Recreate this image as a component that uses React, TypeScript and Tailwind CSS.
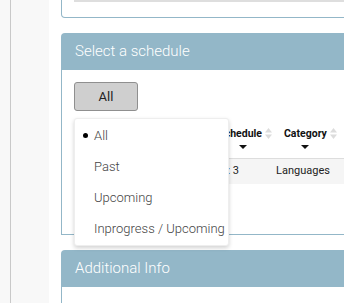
import React from "react";

const SortIcon: React.FC = () => (
  <svg width="7" height="12" viewBox="0 0 7 12" className="ml-[3px] mt-[10px]">
    <polygon points="3.5,0 7,4.5 0,4.5" fill="#dcdcdc" />
    <polygon points="0,6.5 7,6.5 3.5,11" fill="#dcdcdc" />
  </svg>
);

const Caret: React.FC = () => (
  <svg width="8" height="4" viewBox="0 0 8 4">
    <polygon points="0,0 8,0 4,4" fill="#111" />
  </svg>
);

const filters = ["All", "Past", "Upcoming", "Inprogress / Upcoming"];

const App: React.FC = () => {
  return (
    <div className="flex h-[303px] w-[344px] overflow-hidden bg-white font-['Roboto',sans-serif]">
      <aside className="w-[49px] shrink-0 bg-[#f8f8f8]">
        <div className="ml-[10px] h-full border-l border-[#c9c9c9]" />
      </aside>

      <main className="relative flex-1 pl-[12px]">
        {/* bottom of the card above */}
        <div className="h-[18px] w-[300px] rounded-b-[4px] border-x border-b border-[#93b7c8]">
          <div className="ml-[12px] h-[2px] bg-[#dedede]" />
        </div>

        <section className="mt-[15px] w-[300px]">
          <div className="flex h-[37px] items-center rounded-t-[4px] bg-[#93b7c8] pl-[14px] text-[15px] font-light text-white">
            Select a schedule
          </div>
          <div className="h-[165px] border-b border-l border-[#93b7c8] px-[12px] pt-[12px]">
            <button className="h-[29px] w-[64px] rounded-[3px] border border-[#8f8f8f] bg-[#cfcfcf] text-[13px] text-[#222]">
              All
            </button>

            <div className="mt-[7px] flex h-[41px] border-b border-[#dddddd] text-[10.5px] font-bold text-[#111]">
              <div className="w-[138px]" />
              <div className="flex w-[50px] flex-col items-end pt-[8px]">
                <span>Schedule</span>
                <span className="mr-[15px] mt-[3px] flex"><Caret /></span>
              </div>
              <SortIcon />
              <div className="ml-[12px] flex flex-col items-center pt-[8px]">
                <span>Category</span>
                <span className="mt-[3px] flex"><Caret /></span>
              </div>
              <SortIcon />
            </div>
            <div className="flex h-[25px] items-center bg-[#f5f5f5] text-[11px] text-[#222]">
              <div className="w-[165px] text-right">Week: 3</div>
              <div className="pl-[37px]">Languages</div>
            </div>
          </div>
        </section>

        <section className="mt-[15px] w-[300px]">
          <div className="flex h-[37px] items-center rounded-t-[4px] bg-[#93b7c8] pl-[14px] text-[15px] font-light text-white">
            Additional Info
          </div>
          <div className="h-[40px] border-l border-[#93b7c8]" />
        </section>

        {/* open filter menu */}
        <ul className="absolute left-[25px] top-[118px] w-[155px] rounded-[3px] border border-[#eeeeee] bg-white pb-[1px] pt-[1px] shadow-[0_2px_4px_rgba(0,0,0,0.18)]">
          {filters.map((f, i) => (
            <li key={f} className="flex h-[31px] items-center text-[13px] font-light text-[#444]">
              <span className="flex w-[19px] justify-center pl-[2px]">
                {i === 0 && <span className="h-[5px] w-[5px] rounded-full bg-black" />}
              </span>
              {f}
            </li>
          ))}
        </ul>
      </main>
    </div>
  );
};

export default App;
